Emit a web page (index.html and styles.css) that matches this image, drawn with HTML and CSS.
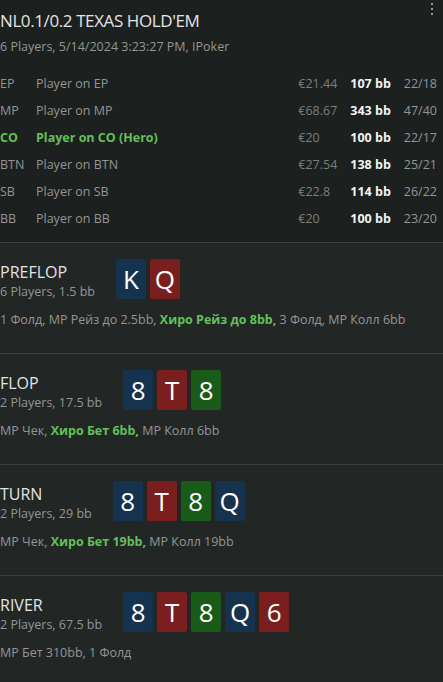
FILE: index.html
```html
<!DOCTYPE html>
<html lang="en">
<head>
    <meta charset="UTF-8">
    <meta name="viewport" content="width=device-width, initial-scale=1.0">
    <title>Hand History</title>
    <link rel="stylesheet" href="styles.css">
</head>
<body>

    <div class="hand-header">
        <div class="menu-dots"><span></span><span></span><span></span></div>
        <h1>NL0.1/0.2 TEXAS HOLD'EM</h1>
        <p class="sub">6 Players, 5/14/2024 3:23:27 PM, IPoker</p>

        <div class="players">
            <span class="pos">EP</span><span class="name">Player on EP</span><span class="stack">€21.44</span><span class="bb">107 bb</span><span class="stats">22/18</span>
            <span class="pos">MP</span><span class="name">Player on MP</span><span class="stack">€68.67</span><span class="bb">343 bb</span><span class="stats">47/40</span>
            <span class="pos hero">CO</span><span class="name hero">Player on CO (Hero)</span><span class="stack">€20</span><span class="bb">100 bb</span><span class="stats">22/17</span>
            <span class="pos">BTN</span><span class="name">Player on BTN</span><span class="stack">€27.54</span><span class="bb">138 bb</span><span class="stats">25/21</span>
            <span class="pos">SB</span><span class="name">Player on SB</span><span class="stack">€22.8</span><span class="bb">114 bb</span><span class="stats">26/22</span>
            <span class="pos">BB</span><span class="name">Player on BB</span><span class="stack">€20</span><span class="bb">100 bb</span><span class="stats">23/20</span>
        </div>
    </div>

    <div class="street">
        <div class="street-top">
            <div class="street-info">
                <h2>PREFLOP</h2>
                <p class="sub">6 Players, 1.5 bb</p>
            </div>
            <div class="cards">
                <span class="card blue">K</span>
                <span class="card red">Q</span>
            </div>
        </div>
        <p class="actions">1 Фолд, MP Рейз до 2.5bb, <b>Хиро Рейз до 8bb,</b> 3 Фолд, MP Колл 6bb</p>
    </div>

    <div class="street">
        <div class="street-top">
            <div class="street-info">
                <h2>FLOP</h2>
                <p class="sub">2 Players, 17.5 bb</p>
            </div>
            <div class="cards">
                <span class="card blue">8</span>
                <span class="card red">T</span>
                <span class="card green">8</span>
            </div>
        </div>
        <p class="actions">MP Чек, <b>Хиро Бет 6bb,</b> MP Колл 6bb</p>
    </div>

    <div class="street">
        <div class="street-top">
            <div class="street-info">
                <h2>TURN</h2>
                <p class="sub">2 Players, 29 bb</p>
            </div>
            <div class="cards">
                <span class="card blue">8</span>
                <span class="card red">T</span>
                <span class="card green">8</span>
                <span class="card blue">Q</span>
            </div>
        </div>
        <p class="actions">MP Чек, <b>Хиро Бет 19bb,</b> MP Колл 19bb</p>
    </div>

    <div class="street">
        <div class="street-top">
            <div class="street-info">
                <h2>RIVER</h2>
                <p class="sub">2 Players, 67.5 bb</p>
            </div>
            <div class="cards">
                <span class="card blue">8</span>
                <span class="card red">T</span>
                <span class="card green">8</span>
                <span class="card blue">Q</span>
                <span class="card red">6</span>
            </div>
        </div>
        <p class="actions">MP Бет 310bb, 1 Фолд</p>
    </div>

</body>
</html>
```

FILE: styles.css
```css
body {
    font-family: "Open Sans", "Noto Sans", sans-serif;
    margin: 0;
    padding: 0;
    background-color: #222726;
    color: #e4e4e4;
}
.hand-header {
    position: relative;
    background-color: #1c201e;
    padding: 9px 6px 10px 0;
    border-bottom: 1px solid #3b3f3e;
}
.menu-dots {
    position: absolute;
    top: 3px;
    right: 10px;
    display: flex;
    flex-direction: column;
    gap: 3px;
}
.menu-dots span {
    width: 2px;
    height: 2px;
    background-color: #9a9a9a;
}
h1 {
    margin: 0;
    font-size: 17px;
    font-weight: 400;
    letter-spacing: -0.4px;
    line-height: 24px;
}
.sub {
    margin: 0;
    font-size: 12.5px;
    color: #959595;
    line-height: 18px;
}
.hand-header .sub {
    margin-top: 5px;
}
.players {
    display: grid;
    grid-template-columns: 23px 1fr auto auto auto;
    column-gap: 13px;
    margin-top: 14px;
    font-size: 12.5px;
    line-height: 27px;
    color: #959595;
}
.players .hero {
    color: #62c05b;
    font-weight: 700;
}
.players .stack {
    color: #7d7d7d;
}
.players .bb {
    color: #f2f2f2;
    font-weight: 700;
}
.street {
    padding: 16px 0 24px 0;
    border-bottom: 1px solid #3b3f3e;
}
.street-top {
    display: flex;
    align-items: flex-start;
    gap: 21px;
}
.street-info {
    padding-top: 3px;
}
h2 {
    margin: 0;
    font-size: 16px;
    font-weight: 400;
    line-height: 20px;
}
.street-info .sub {
    margin-top: 1px;
}
.cards {
    display: flex;
    gap: 4px;
}
.card {
    width: 30px;
    height: 40px;
    border-radius: 2px;
    color: #fff;
    font-size: 26px;
    line-height: 40px;
    text-align: center;
}
.card.blue {
    background-color: #15334f;
}
.card.red {
    background-color: #7b1f1e;
}
.card.green {
    background-color: #1b5b1a;
}
.actions {
    margin: 10px 0 0 0;
    font-size: 12.5px;
    line-height: 18px;
    color: #959595;
}
.actions b {
    color: #62c05b;
}
```
